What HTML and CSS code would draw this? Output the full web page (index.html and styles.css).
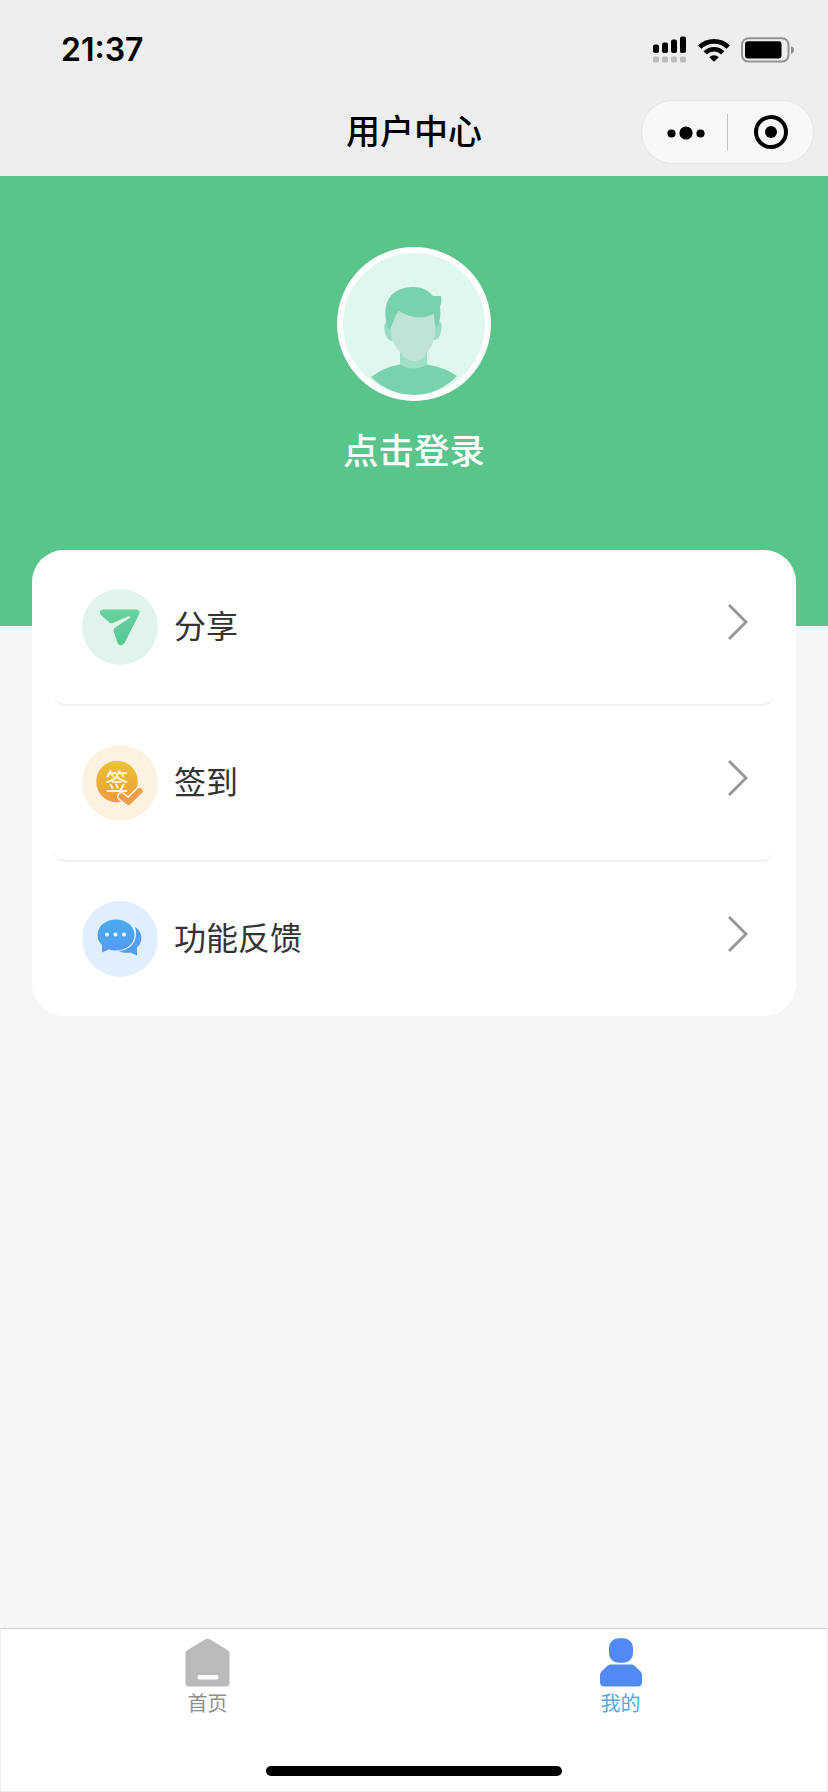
FILE: index.html
```html
<!DOCTYPE html>
<html lang="zh-CN">
<head>
  <meta charset="UTF-8">
  <meta name="viewport" content="width=device-width, initial-scale=1.0">
  <title>用户中心</title>
  <link rel="stylesheet" href="styles.css">
</head>
<body>
  <div class="page">
    <header class="header">
      <div class="status-bar">
        <span class="time">21:37</span>
        <div class="status-icons">
          <svg width="34" height="28" viewBox="0 0 34 28">
            <rect x="0" y="8.5" width="6" height="8.5" rx="2"/>
            <rect x="9" y="6.5" width="6" height="10.5" rx="2"/>
            <rect x="18" y="3.5" width="6" height="13.5" rx="2"/>
            <rect x="27" y="0.5" width="6" height="16.5" rx="2"/>
            <g fill="#bdbdbd">
              <rect x="0" y="20.5" width="6" height="6" rx="1.6"/>
              <rect x="9" y="20.5" width="6" height="6" rx="1.6"/>
              <rect x="18" y="20.5" width="6" height="6" rx="1.6"/>
              <rect x="27" y="20.5" width="6" height="6" rx="1.6"/>
            </g>
          </svg>
          <svg width="32" height="24" viewBox="0 0 32 24">
            <g fill="none" stroke="#000" stroke-width="4.6">
              <path d="M1.7 9.2a20.5 20.5 0 0 1 28.6 0"/>
              <path d="M7.2 14.8a12.6 12.6 0 0 1 17.6 0"/>
            </g>
            <path d="M11.2 19.2a6.8 6.8 0 0 1 9.6 0L16 23.8z"/>
          </svg>
          <svg width="54" height="26" viewBox="0 0 54 26">
            <rect x="1" y="1.2" width="46.5" height="23.4" rx="6.5" fill="none" stroke="#949494" stroke-width="2"/>
            <rect x="4" y="4.2" width="36.5" height="17.4" rx="3"/>
            <path d="M50 9.2c2.2.6 3 2 3 3.8s-.8 3.2-3 3.8z" fill="#8d8d8d"/>
          </svg>
        </div>
      </div>
      <div class="nav-bar">
        <h1>用户中心</h1>
        <div class="capsule">
          <svg width="60" height="38" viewBox="0 0 60 38">
            <circle cx="15.5" cy="20.5" r="4.1"/>
            <circle cx="30" cy="20" r="6.6"/>
            <circle cx="44.5" cy="20.5" r="4.1"/>
          </svg>
          <span class="capsule-line"></span>
          <svg width="38" height="38" viewBox="0 0 38 38">
            <circle cx="19" cy="19" r="15" fill="none" stroke="#000" stroke-width="4"/>
            <circle cx="19" cy="19" r="6"/>
          </svg>
        </div>
      </div>
    </header>

    <section class="user">
      <div class="avatar">
        <svg width="142" height="142" viewBox="0 0 142 142">
          <path d="M28 124Q41 114 57 111.500h27Q101 114 114 123Q96 141.500 71 142Q46 141.500 28 124z" fill="#77d2ad"/>
          <path d="M57 98h27v13.500q-13.500 8-27 0z" fill="#a0e0c7"/>
          <path d="M49 69h-6q-3 3-1 10c1 6 4 9 8 9zM92 69h5q3 3 1 9c-1 6-3 9-7 9z" fill="#9bdcc4"/>
          <path d="M48 58Q70 46 92 58v20c0 11-5 18-11 26q-10 8-20 0c-7-8-13-15-13-26z" fill="#bfe4d7"/>
          <path d="M45 75c-8-25 3-41 25-41 9 0 15 3 20 9h8c1 5 0 8-1 11 1 8 0 14-3 21-2-3-3-9-3-14q-17 8-35-3c-5 5-6 14-9 18z" fill="#77d2ad"/>
        </svg>
      </div>
      <p class="login">点击登录</p>
    </section>

    <main class="menu">
      <div class="menu-item">
        <svg class="menu-icon" viewBox="0 0 76 76">
          <defs>
            <linearGradient id="green" x1="0" y1="0" x2="0" y2="1">
              <stop offset="0" stop-color="#6bd2a2"/>
              <stop offset="1" stop-color="#55c691"/>
            </linearGradient>
          </defs>
          <circle cx="38" cy="38" r="38" fill="#e0f4ec"/>
          <path d="M21 20.500h33.500q4.500.5 2.500 5L42.500 54q-3.500 4.500-7 0L31.700 42q-.4-2 1.300-3.200L47.500 29q1.500-2.200-1-1.700L31 34q-2 .7-3.700-.6L19 26q-3-4.500 2-5.500z" fill="url(#green)"/>
        </svg>
        <span class="menu-text">分享</span>
        <svg class="arrow" viewBox="0 0 20 36"><path d="M1 1l17 17L1 35"/></svg>
      </div>
      <div class="menu-item">
        <svg class="menu-icon" viewBox="0 0 76 76">
          <defs>
            <linearGradient id="orange" x1="0" y1="0" x2="0" y2="1">
              <stop offset="0" stop-color="#ecc337"/>
              <stop offset="1" stop-color="#ee9a3d"/>
            </linearGradient>
          </defs>
          <circle cx="38" cy="38" r="38" fill="#fdf2e2"/>
          <circle cx="35" cy="36.500" r="20.800" fill="url(#orange)"/>
          <text class="sign" x="35" y="45">签</text>
          <path d="M39.500 51.500l7 5.500 11-11" fill="none" stroke="#fdf2e2" stroke-width="9" stroke-linecap="round" stroke-linejoin="round"/>
          <path d="M39.500 51.500l7 5.500 11-11" fill="none" stroke="#ee9d4b" stroke-width="6" stroke-linecap="round" stroke-linejoin="round"/>
        </svg>
        <span class="menu-text">签到</span>
        <svg class="arrow" viewBox="0 0 20 36"><path d="M1 1l17 17L1 35"/></svg>
      </div>
      <div class="menu-item">
        <svg class="menu-icon" viewBox="0 0 76 76">
          <defs>
            <linearGradient id="blue" x1="0" y1="0" x2="0" y2="1">
              <stop offset="0" stop-color="#46aaf0"/>
              <stop offset="1" stop-color="#569bf3"/>
            </linearGradient>
          </defs>
          <circle cx="38" cy="38" r="38" fill="#e1eefd"/>
          <path d="M53 26c8 5 8.500 15 2 20.500v8l-7-3c-4 .8-8 .3-11-1.500 13-1 20-12 16-24z" fill="#549ff2"/>
          <path d="M34 18.500c10.500 0 18.500 7 18.500 15.500S44.500 49.500 34 49.500c-2.500 0-5-.4-7-1.300L20 51.500V44c-3-2.700-4.500-6-4.500-10 0-8.500 8-15.500 18.500-15.500z" fill="url(#blue)"/>
          <g fill="#e9f4ff">
            <circle cx="25" cy="33.500" r="2.100"/>
            <circle cx="33.500" cy="33.500" r="2.100"/>
            <circle cx="42" cy="33.500" r="2.100"/>
          </g>
        </svg>
        <span class="menu-text">功能反馈</span>
        <svg class="arrow" viewBox="0 0 20 36"><path d="M1 1l17 17L1 35"/></svg>
      </div>
    </main>

    <nav class="tab-bar">
      <div class="tabs">
        <div class="tab">
          <svg width="50" height="50" viewBox="0.5 0 50 50">
            <path d="M22.500 1.500q2.500-1.500 5 0L45 12q2 1.200 2 3.500V45q0 3.500-3.500 3.500h-37Q3 48.500 3 45V15.500Q3 13.200 5 12z" fill="#bababa"/>
            <rect x="15" y="37" width="21" height="4.500" rx="2" fill="#fff"/>
          </svg>
          <span>首页</span>
        </div>
        <div class="tab active">
          <svg width="50" height="50" viewBox="0 0 50 50">
            <rect x="13" y="0.3" width="24" height="24.400" rx="9.500" fill="#5389f5"/>
            <path d="M15 26.500h20q2 0 3.500 1.200l6 5.800q1.500 1.500 1.500 3.500v7q0 4.500-4.500 4.500h-33Q4 48.500 4 44v-7Q4 35 5.500 33.500l6-5.800Q13 26.500 15 26.500z" fill="#5389f5"/>
          </svg>
          <span>我的</span>
        </div>
      </div>
      <div class="home-line"></div>
    </nav>
  </div>
</body>
</html>
```
FILE: styles.css
```css
* {
  box-sizing: border-box;
}
body {
  margin: 0;
  font-family: "Liberation Sans", "Noto Sans CJK SC", sans-serif;
  background-color: #f5f5f5;
  color: #333;
}
svg {
  display: block;
  flex-shrink: 0;
}
.page {
  display: flex;
  flex-direction: column;
  width: 828px;
  height: 1792px;
}
/* Barra superior */
.header {
  height: 176px;
  background-color: #eee;
  color: #000;
}
.status-bar {
  display: flex;
  justify-content: space-between;
  align-items: center;
  height: 88px;
  padding: 11px 33px 0 61px;
}
.time {
  font-family: Inter, sans-serif;
  font-size: 32px;
  font-weight: 600;
  line-height: 40px;
}
.status-icons {
  display: flex;
  align-items: center;
  gap: 11px;
}
.nav-bar {
  display: grid;
  grid-template-columns: 1fr auto 1fr;
  align-items: center;
  height: 88px;
  padding: 0 14px;
}
.nav-bar h1 {
  grid-column: 2;
  margin: 0;
  font-size: 34px;
  font-weight: 500;
  line-height: 48px;
}
.capsule {
  display: flex;
  justify-content: space-between;
  align-items: center;
  justify-self: end;
  width: 173px;
  height: 64px;
  padding: 0 23px 0 14px;
  border: 1px solid #e6e6e6;
  border-radius: 32px;
  background-color: #f8f8f8;
}
.capsule-line {
  width: 1px;
  height: 37px;
  margin-right: 13px;
  background-color: #c4c4c4;
}
/* Usuario */
.user {
  display: flex;
  flex-direction: column;
  align-items: center;
  height: 450px;
  padding-top: 71px;
  background-color: #5bc48b;
}
.avatar {
  width: 154px;
  height: 154px;
  border: 6px solid #fff;
  border-radius: 50%;
  background-color: #dff7ee;
  overflow: hidden;
}
.login {
  margin: 26px 0 0;
  font-size: 35.5px;
  font-weight: 500;
  line-height: 50px;
  color: #fff;
}
/* Lista de opciones */
.menu {
  position: relative;
  height: 466px;
  margin: -76px 32px 0;
  padding: 0 22px;
  border-radius: 32px;
  background-color: #fff;
}
.menu-item {
  display: flex;
  align-items: center;
  height: 156px;
  padding: 0 26px 0 28px;
  border-bottom: 2px solid #f0f0f0;
  border-radius: 12px;
}
.menu-item:last-child {
  height: 154px;
  border-bottom: none;
}
.menu-icon {
  width: 76px;
  height: 76px;
}
.sign {
  font-size: 23px;
  font-weight: 500;
  fill: #fff6dc;
  text-anchor: middle;
}
.menu-text {
  flex: 1;
  margin-left: 16px;
  font-size: 32px;
  line-height: 46px;
}
.arrow {
  width: 20px;
  height: 36px;
  margin-bottom: 10px;
  fill: none;
  stroke: #999;
  stroke-width: 3;
}
/* Barra de pestañas */
.tab-bar {
  display: flex;
  flex-direction: column;
  justify-content: space-between;
  align-items: center;
  height: 164px;
  margin-top: auto;
  padding-bottom: 15px;
  border: 1px solid #ededed;
  border-top-color: #cfcfcf;
  background-color: #fff;
}
.tabs {
  display: flex;
  width: 100%;
}
.tab {
  flex: 1;
  display: flex;
  flex-direction: column;
  align-items: center;
  padding-top: 9px;
  font-size: 20px;
  line-height: 32px;
  color: #8f8f8f;
}
.tab.active {
  color: #55a8e0;
}
.home-line {
  width: 296px;
  height: 10px;
  border-radius: 5px;
  background-color: #000;
}
```
